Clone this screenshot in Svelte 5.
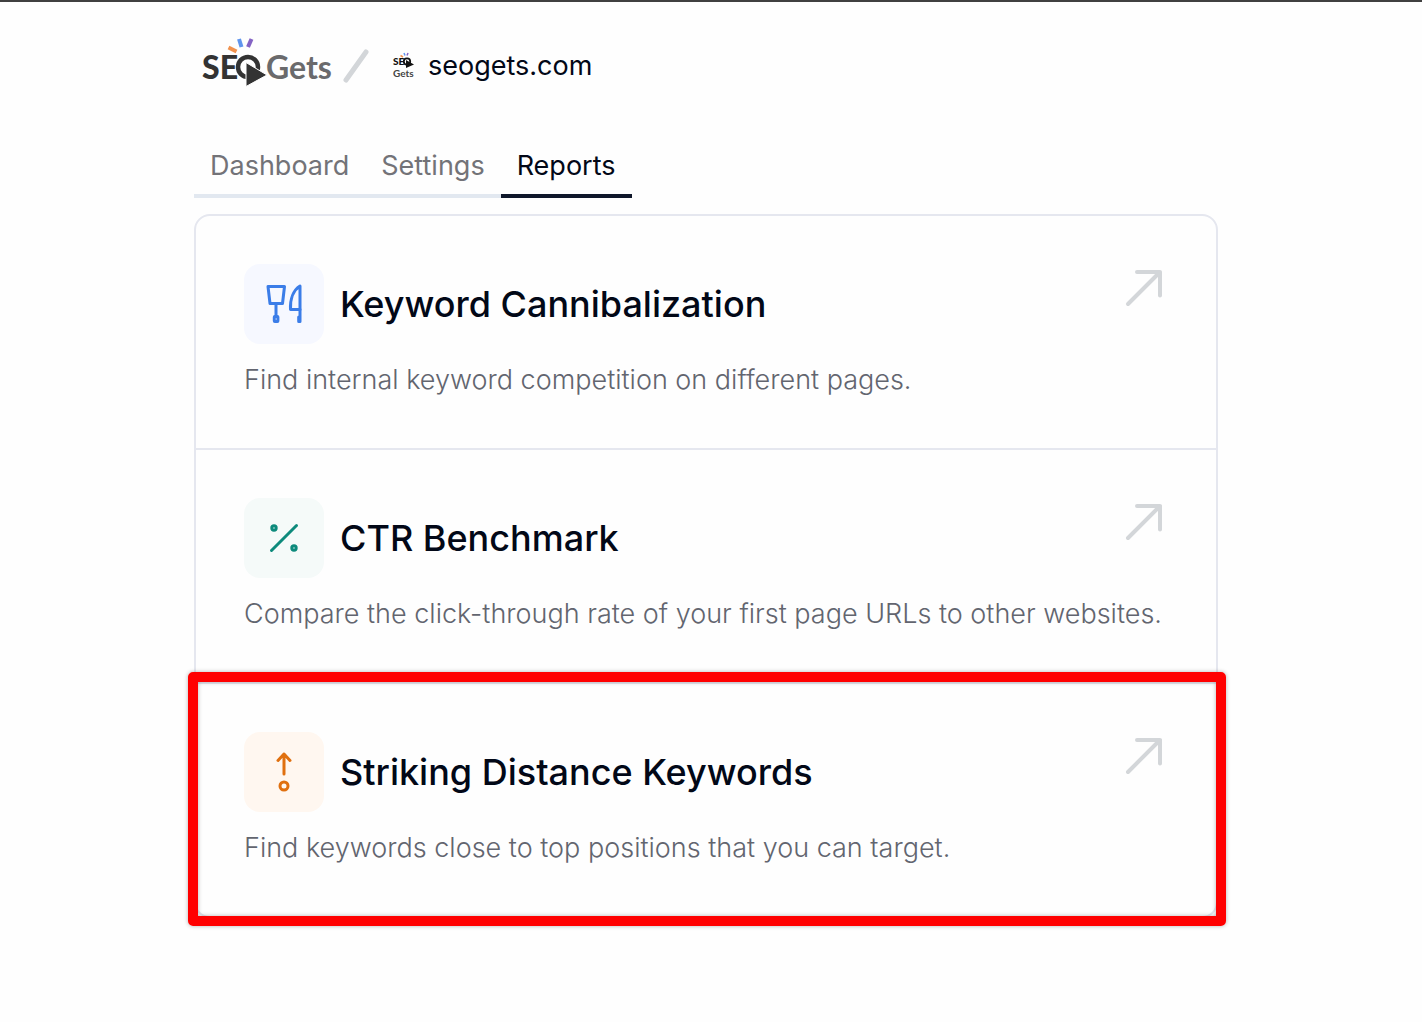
<script>
  const tabs = [
    { name: "Dashboard", href: "#dashboard" },
    { name: "Settings", href: "#settings" },
    { name: "Reports", href: "#reports" },
  ];
  const reports = [
    {
      id: "cannibalization",
      title: "Keyword Cannibalization",
      text: "Find internal keyword competition on different pages.",
    },
    {
      id: "ctr",
      title: "CTR Benchmark",
      text: "Compare the click-through rate of your first page URLs to other websites.",
    },
    {
      id: "striking",
      title: "Striking Distance Keywords",
      text: "Find keywords close to top positions that you can target.",
    },
  ];
  let current = $state("Reports");
  let highlighted = "striking";
</script>

<div class="page">
  <div class="content">
    <header>
      <a class="logo" href="#home" aria-label="SEO Gets">
        <svg width="132" height="58" viewBox="0 0 132 58">
          <g fill="none" stroke-width="4">
            <path stroke="#f0924f" d="M26.5 10.5 L34.5 14.5" />
            <path stroke="#5f95ee" d="M37 2 L39.5 10" />
            <path stroke="#8463c4" d="M49.5 2 L46 10" />
          </g>
          <text x="0" y="42" font-size="32" font-weight="900" fill="#333">SE</text>
          <circle cx="46" cy="30" r="10" fill="none" stroke="#333" stroke-width="4.5" />
          <path d="M44 25.5 L65 38 L44 49.5 Z" fill="#333" stroke="#fff" stroke-width="1" />
          <text x="64" y="42" font-size="32" font-weight="700" fill="#6a6a6c">Gets</text>
        </svg>
      </a>
      <svg class="slash" width="28" height="36" viewBox="0 0 28 36">
        <path d="M4 32 L24 4" fill="none" stroke="#d3d6d9" stroke-width="5" stroke-linecap="round" />
      </svg>
      <a class="site" href="#site">
        <svg width="24" height="28" viewBox="0 0 24 28" aria-hidden="true">
          <g stroke-width="1.5">
            <path stroke="#f0924f" d="M8.5 3.5 L11 5" />
            <path stroke="#5f95ee" d="M12 1 L13 3.5" />
            <path stroke="#8463c4" d="M16 1 L15 3.5" />
          </g>
          <text x="1" y="13" font-size="10" font-weight="900" fill="#111">SE</text>
          <circle cx="15" cy="9.5" r="3.2" fill="none" stroke="#111" stroke-width="1.8" />
          <path d="M14 8 L22 12.5 L14 16 Z" fill="#111" />
          <text x="1" y="25" font-size="10" font-weight="700" fill="#444">Gets</text>
        </svg>
        <span>seogets.com</span>
      </a>
    </header>

    <nav>
      {#each tabs as tab}
        <a
          href={tab.href}
          class:active={current === tab.name}
          onclick={() => (current = tab.name)}>{tab.name}</a
        >
      {/each}
    </nav>

    <main>
      {#each reports as report}
        <a class="report" class:highlighted={report.id === highlighted} href="#{report.id}">
          <div class="heading">
            <span class="icon {report.id}">
              <svg width="48" height="48" viewBox="0 0 48 48">
                {#if report.id === "cannibalization"}
                  <path d="M8 6.5 H24.5 L22.500 23.5 H10 Z" />
                  <path d="M16 23.5 V36" />
                  <rect x="14.3" y="36.500" width="3.6" height="5" rx="0.5" />
                  <path d="M40 6 V29.5 H30.5 C30 19 33.5 10 40 6 Z" />
                  <path d="M40 29.5 V41.5 H38.7 V37 H40" />
                {:else if report.id === "ctr"}
                  <path d="M11.5 36.5 L36.5 11.5" />
                  <circle cx="14" cy="14" r="2.2" />
                  <circle cx="34" cy="34" r="2.2" />
                {:else}
                  <path d="M24 26 V6 M18 12.500 L24 6 L30 12.500" />
                  <circle cx="24" cy="38" r="4" />
                {/if}
              </svg>
            </span>
            <h2>{report.title}</h2>
            <svg class="arrow" width="48" height="48" viewBox="0 0 48 48">
              <path d="M8 40 L40 8 M17 8 H40 V31.500" />
            </svg>
          </div>
          <p>{report.text}</p>
        </a>
      {/each}
    </main>
  </div>
</div>

<style>
  :global(body) {
    background: #fefefe;
  }

  .page {
    border-top: 2px solid #404040;
    padding: 34px 26px 80px 16px;
    font-family: Inter, "Liberation Sans", sans-serif;
    color: #020817;
  }

  .content {
    max-width: 1024px;
    margin: 0 auto;
  }

  a {
    color: inherit;
    text-decoration: none;
  }

  svg {
    display: block;
    flex-shrink: 0;
  }

  header {
    display: flex;
    align-items: center;
    height: 60px;
    padding-left: 8px;
  }

  .logo text,
  .site text {
    font-family: Lato, sans-serif;
  }

  .slash {
    margin-left: 8px;
  }

  .site {
    display: flex;
    align-items: center;
    gap: 12px;
    margin-left: 22px;
    font-size: 27px;
    line-height: 40px;
  }

  nav {
    display: flex;
    width: fit-content;
    margin: 40px 0 16px;
    font-size: 27px;
    line-height: 40px;
    color: #737378;
  }

  nav a {
    padding: 10px 16px 8px;
    border-bottom: 4px solid #e2e8f0;
  }

  nav a.active {
    color: #020817;
    border-color: #0f172a;
  }

  main {
    border: 2px solid #e5e7ef;
    border-radius: 16px;
  }

  .report {
    display: block;
    position: relative;
    padding: 48px;
  }

  .report + .report {
    border-top: 2px solid #e5e7ef;
  }

  .heading {
    display: flex;
    align-items: center;
    gap: 16px;
  }

  .icon {
    padding: 16px;
    border-radius: 16px;
  }

  .icon svg,
  .arrow {
    fill: none;
    stroke: currentColor;
    stroke-width: 3;
    stroke-linecap: round;
    stroke-linejoin: round;
  }

  .cannibalization {
    background: #f6f8ff;
    color: #3b7de8;
  }

  .ctr {
    background: #f5faf9;
    color: #0d8a7c;
  }

  .striking {
    background: #fff7f0;
    color: #e0700f;
  }

  .arrow {
    align-self: flex-start;
    margin-left: auto;
    color: #d3d6d9;
    stroke-width: 4;
  }

  h2 {
    margin: 0;
    font-size: 36px;
    line-height: 48px;
    font-weight: 500;
  }

  p {
    margin: 16px 0 0;
    font-size: 27px;
    line-height: 40px;
    font-weight: 300;
    color: #62656f;
  }

  /* marker frame drawn around the picked report */
  .highlighted::after {
    content: "";
    position: absolute;
    inset: -12px -10px -10px -8px;
    border: 10px solid #f00;
    border-radius: 5px;
    box-shadow: 0 0 4px rgba(0, 0, 0, 0.3), inset 0 0 4px rgba(0, 0, 0, 0.3);
    pointer-events: none;
  }
</style>
